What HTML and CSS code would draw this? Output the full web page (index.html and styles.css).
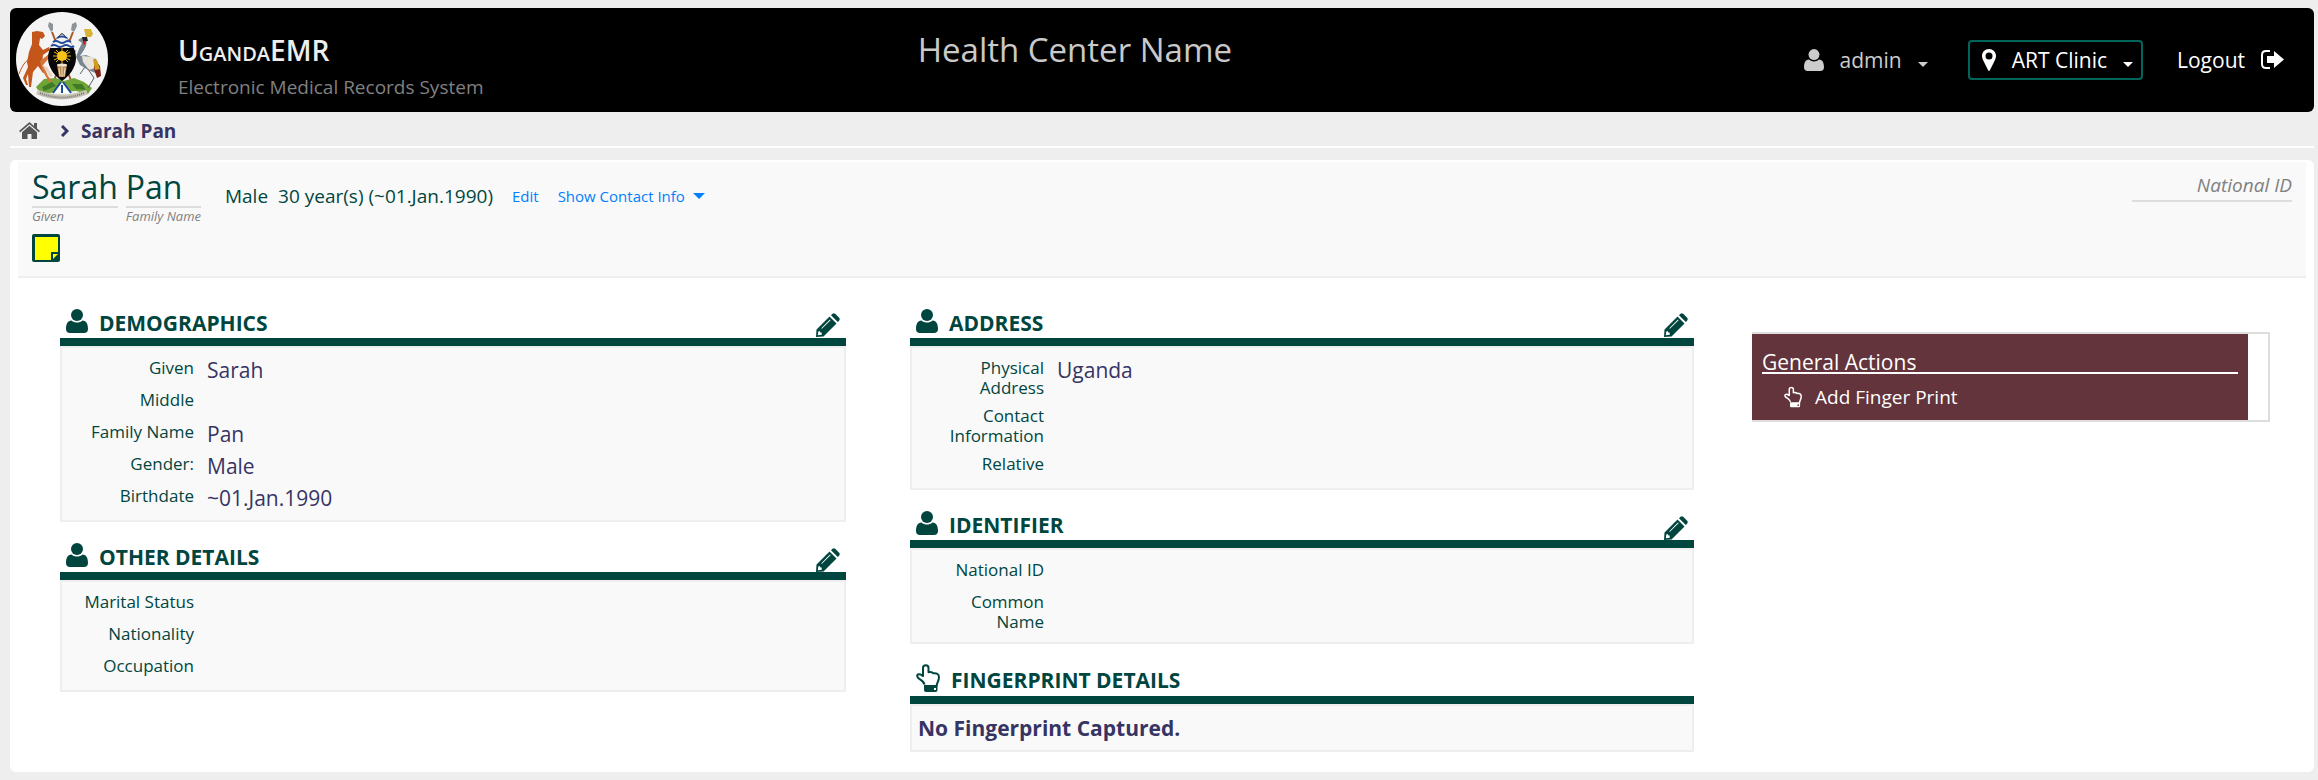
FILE: index.html
```html
<!DOCTYPE html>
<html lang="en">
  <head>
    <meta charset="utf-8">
    <title>UgandaEMR - Sarah Pan</title>
    <link rel="stylesheet" href="styles.css">
  </head>
  <body>
    <!-- shared icons -->
    <svg class="sprite" width="0" height="0">
      <symbol id="icon-user" viewBox="0 0 22 24">
        <circle cx="11" cy="6" r="6" />
        <path d="M5.500 11.500C8.500 14.200 13.500 14.200 16.500 11.500C20.500 11.500 22 15.500 22 20C22 22.500 20.500 24 18 24H4C1.500 24 0 22.500 0 20C0 15.500 1.500 11.500 5.500 11.500Z" />
      </symbol>
      <symbol id="icon-pencil" viewBox="0 0 24 24">
        <path fill-rule="evenodd" d="M0 24L.5 16.500L13.500 3.500L20.500 10.500L7.500 23.500ZM2.300 18.500L1.800 22.200L5.800 21.700L5.600 19.500L4 19.300L3.800 18ZM5.300 15.200L14 6.600L14.600 7.200L5.900 15.800Z" />
        <path d="M15 2.200L16.500.7Q18 -.2 19.200.8L23.200 4.800Q24.200 6 23.200 7.500L21.800 9Z" />
      </symbol>
      <symbol id="icon-hand" viewBox="0 0 24 28">
        <path fill="none" stroke="currentColor" stroke-width="2" stroke-linejoin="round" d="M8.500 20.500C8 17.500 6 16.500 3.500 15C.5 13.500.5 10.500 3 10.300C5 10.200 6 11.500 7 12V4C7 .3 12.500.3 12.500 4V8.200C15 7.600 16.500 8.300 17.300 9.300C19.500 8.800 23 9.500 23 13C23 17 21 18.500 20.500 22" />
        <path fill-rule="evenodd" d="M8 21H21.500V26Q21.500 28 19.500 28H10Q8 28 8 26ZM18 24V26H20V24Z" />
      </symbol>
    </svg>

    <header class="top-bar">
      <a class="logo" href="#" aria-label="Home">
        <svg width="92" height="94" viewBox="0 0 92 94">
          <ellipse cx="46" cy="47" rx="46" ry="47" fill="#f4f4f4" />
          <!-- spears -->
          <path d="M36 20L58 76M57 20L35 76" stroke="#a8582a" stroke-width="2" />
          <path d="M33 10L37 12L37 18L35 20L32 14ZM60 10L56 12L55 18L58 20L61 14Z" fill="#8d959a" />
          <!-- mound -->
          <path d="M20 75L28 67L40 66L48 69L58 66L68 70L76 76L72 82L60 79L32 81L24 81Z" fill="#6fa536" />
          <path d="M26 75L36 70L40 74L28 79ZM56 72L66 72L70 78L60 77Z" fill="#3f7a25" />
          <path d="M46 70L36 82L46 80L57 82Z" fill="#fff" />
          <path d="M45 70L37 81M47 70L55 81M46 73V81" stroke="#1b4b9b" stroke-width="2" />
          <!-- antelope -->
          <path d="M16 20L21 19L27 20L29 24L26 27L24 26L23 33L27 38L33 35L34 38L27 43L26 53L30 60L27 61L22 54L17 60L15 75L13 75L12 62L10 67L12 73L10 73L7 66L12 55L11 50L13 40L16 32Z" fill="#c4561b" />
          <path d="M24 49L33 42L34 45L27 53L32 64L36 69L33 70L26 58Z" fill="#d4763b" />
          <path d="M12 48Q7 51 3 62" stroke="#c4561b" stroke-width="1" fill="none" />
          <path d="M26 53L31 55L37 64L34 65Z" fill="#ead4bd" />
          <!-- crane -->
          <path d="M68 17L75 17L77 22L75 25L70 25Z" fill="#d8b334" />
          <path d="M62 28L67 25L71 28L70 34L68 38L64 44L70 43L80 47L84 57L82 62L72 58L64 53L60 45L63 37L66 31Z" fill="#7a8791" />
          <path d="M66 25L71 25L72 29L67 29Z" fill="#222" />
          <path d="M67 29L70 29L69 33L67 32Z" fill="#c6251f" />
          <path d="M66 44L78 45L82 55L73 58L67 50Z" fill="#e8e4da" />
          <path d="M78 47L84 54L85 64L81 66L78 57Z" fill="#7d2317" />
          <path d="M77 47L81 48L84 57L79 58Z" fill="#cf9c20" />
          <path d="M69 55L64 62M72 57L78 66L72 76M60 39L54 40" stroke="#57616b" stroke-width="1" fill="none" />
          <!-- shield -->
          <path d="M46 21C52 26 60 35 60 46C60 56 53 64 46 69C39 64 32 56 32 46C32 35 40 26 46 21Z" fill="#080808" />
          <path d="M46 22C50 25 55 30 58 36H34C37 30 42 25 46 22Z" fill="#f4f4f4" />
          <path d="M41 26Q46 23 51 26M37 30Q40 28 43 30T49 30T55 30M35 34Q38 32 41 34T47 34T53 34T58 34" stroke="#244a9c" stroke-width="2" fill="none" />
          <path d="M46 35V53M37 44H55M40 38L52 50M52 38L40 50M38 40L54 48M54 40L38 48" stroke="#e8b719" stroke-width="1" />
          <circle cx="46" cy="44" r="5" fill="#f6c31d" />
          <path d="M41 53H51L49 65H43Z" fill="#b98a56" />
          <ellipse cx="46" cy="53" rx="5" ry="1.500" fill="#eee2cc" />
          <path d="M43 56L44 64M46 55V65M49 56L48 64" stroke="#f0dcb8" stroke-width="1" />
          <!-- scroll -->
          <path d="M21 80Q46 90 71 80" fill="none" stroke="#c9c5b6" stroke-width="5" />
          <path d="M24 81Q46 90 68 81" fill="none" stroke="#777" stroke-width="2" stroke-dasharray="1 1" />
        </svg>
      </a>
      <div class="brand">
        <h1 class="brand-name">UgandaEMR</h1>
        <p class="brand-text">Electronic Medical Records System</p>
      </div>
      <div class="center-name">Health Center Name</div>
      <nav class="user-nav">
        <button type="button" class="nav-user">
          <svg width="20" height="22"><use href="#icon-user" /></svg>
          admin
          <span class="caret"></span>
        </button>
        <button type="button" class="nav-location">
          <svg width="14" height="22" viewBox="0 0 14 22">
            <path fill-rule="evenodd" d="M7 0C11 0 14 3 14 7C14 9 13 11 12 13L8 21Q7 23 6 21L2 13C1 11 0 9 0 7C0 3 3 0 7 0ZM7 3.500A3.500 3.500 0 1 0 7 10.500A3.500 3.500 0 1 0 7 3.500Z" />
          </svg>
          ART Clinic
          <span class="caret"></span>
        </button>
        <a class="nav-logout" href="#">
          Logout
          <svg width="23" height="20" viewBox="0 0 23 20">
            <path d="M9 1H5Q1 1 1 5V14Q1 18 5 18H9" fill="none" stroke="currentColor" stroke-width="2" />
            <path d="M6 6H13V1L23 9.500L13 18V13H6Z" />
          </svg>
        </a>
      </nav>
    </header>

    <nav class="breadcrumbs">
      <a href="#" aria-label="Home">
        <svg class="home-icon" width="21" height="18" viewBox="0 0 21 18">
          <path d="M10.500 0L15 4V1H18V6.500L21 9L19.800 10.300L10.500 2.300L1.200 10.300L0 9Z" />
          <path d="M10.500 3.800L18 10.200V17H12.500V12H8.500V17H3V10.200Z" />
        </svg>
      </a>
      <svg class="chevron" width="8" height="12" viewBox="0 0 8 12"><path d="M1 1L6 6L1 11" /></svg>
      <span>Sarah Pan</span>
    </nav>

    <main class="panel">
      <div class="patient-header">
        <div>
          <div class="patient-row">
            <h2 class="patient-name">
              <span class="name-part">Sarah<em>Given</em></span>
              <span class="name-part">Pan<em>Family Name</em></span>
            </h2>
            <span class="gender">Male</span>
            <span class="age">30 year(s) (~01.Jan.1990)</span>
            <a class="header-link" href="#">Edit</a>
            <a class="header-link" href="#">Show Contact Info <span class="caret-large"></span></a>
          </div>
          <button type="button" class="note" aria-label="Sticky note">
            <svg width="28" height="28" viewBox="0 0 28 28">
              <rect width="28" height="28" rx="2" fill="#00463f" />
              <path d="M3 3H26V18H19V26H3Z" fill="#ff0" />
              <path d="M21 25V20H26Z" fill="#ff0" />
            </svg>
          </button>
        </div>
        <div class="identifier"><em>National ID</em></div>
      </div>

      <div class="dashboard">
        <div class="column-first">
          <section class="info">
            <div class="info-header">
              <svg width="22" height="24"><use href="#icon-user" /></svg>
              <h3>DEMOGRAPHICS</h3>
              <button type="button" class="edit" aria-label="Edit demographics"><svg width="24" height="24"><use href="#icon-pencil" /></svg></button>
            </div>
            <dl class="info-body">
              <div><dt>Given</dt><dd>Sarah</dd></div>
              <div><dt>Middle</dt><dd></dd></div>
              <div><dt>Family Name</dt><dd>Pan</dd></div>
              <div><dt>Gender:</dt><dd>Male</dd></div>
              <div><dt>Birthdate</dt><dd>~01.Jan.1990</dd></div>
            </dl>
          </section>
          <section class="info">
            <div class="info-header">
              <svg width="22" height="24"><use href="#icon-user" /></svg>
              <h3>OTHER DETAILS</h3>
              <button type="button" class="edit" aria-label="Edit other details"><svg width="24" height="24"><use href="#icon-pencil" /></svg></button>
            </div>
            <dl class="info-body">
              <div><dt>Marital Status</dt><dd></dd></div>
              <div><dt>Nationality</dt><dd></dd></div>
              <div><dt>Occupation</dt><dd></dd></div>
            </dl>
          </section>
        </div>

        <div class="column-second">
          <section class="info">
            <div class="info-header">
              <svg width="22" height="24"><use href="#icon-user" /></svg>
              <h3>ADDRESS</h3>
              <button type="button" class="edit" aria-label="Edit address"><svg width="24" height="24"><use href="#icon-pencil" /></svg></button>
            </div>
            <dl class="info-body">
              <div><dt>Physical Address</dt><dd>Uganda</dd></div>
              <div><dt>Contact Information</dt><dd></dd></div>
              <div><dt>Relative</dt><dd></dd></div>
            </dl>
          </section>
          <section class="info">
            <div class="info-header">
              <svg width="22" height="24"><use href="#icon-user" /></svg>
              <h3>IDENTIFIER</h3>
              <button type="button" class="edit" aria-label="Edit identifier"><svg width="24" height="24"><use href="#icon-pencil" /></svg></button>
            </div>
            <dl class="info-body">
              <div><dt>National ID</dt><dd></dd></div>
              <div><dt>Common Name</dt><dd></dd></div>
            </dl>
          </section>
          <section class="info">
            <div class="info-header info-header-tall">
              <svg width="24" height="28"><use href="#icon-hand" /></svg>
              <h3>FINGERPRINT DETAILS</h3>
            </div>
            <p class="info-message">No Fingerprint Captured.</p>
          </section>
        </div>

        <aside class="actions">
          <div class="actions-inner">
            <h3>General Actions</h3>
            <a href="#">
              <svg width="18" height="22" viewBox="0 0 24 28"><use href="#icon-hand" /></svg>
              Add Finger Print
            </a>
          </div>
        </aside>
      </div>
    </main>
  </body>
</html>
```
FILE: styles.css
```css
* {
  box-sizing: border-box;
}

body {
  margin: 0;
  padding: 8px 4px 8px 10px;
  background: #eee;
  color: #363463;
  font-family: "Open Sans", sans-serif;
  font-size: 21px;
}

h1, h2, h3, p, dl, dd {
  margin: 0;
}

a {
  color: inherit;
  text-decoration: none;
}

button {
  padding: 0;
  border: none;
  background: none;
  color: inherit;
  font: inherit;
  cursor: pointer;
}

svg {
  display: block;
  flex: none;
  fill: currentColor;
}

.sprite {
  position: absolute;
}

.caret {
  margin-top: 8px;
  border: 5px solid transparent;
  border-top-color: currentColor;
  border-bottom: none;
}

/* top bar */
.top-bar {
  display: grid;
  grid-template-columns: 6fr auto 7fr;
  height: 104px;
  padding: 4px 30px 0 6px;
  background: #000;
  border-radius: 6px;
}

.logo {
  grid-area: 1 / 1;
  justify-self: start;
}

.brand {
  grid-area: 1 / 1;
  padding: 18px 0 0 162px;
}

.brand-name {
  color: #eee;
  font-size: 28px;
  font-weight: 600;
  font-variant: small-caps;
  line-height: 40px;
}

.brand-text {
  color: #808080;
  font-size: 19px;
  line-height: 34px;
}

.center-name {
  padding-top: 16px;
  color: #c9c9c9;
  font-family: "Trebuchet MS", "Open Sans", sans-serif;
  font-size: 33px;
  line-height: 44px;
}

.user-nav {
  display: flex;
  justify-self: end;
  align-items: center;
  height: 40px;
  margin-top: 28px;
  color: #fff;
}

.nav-user,
.nav-location,
.nav-logout {
  display: flex;
  align-items: center;
  gap: 16px;
}

.nav-user {
  margin-right: 40px;
  color: #ccc;
}

.nav-location {
  height: 40px;
  margin-right: 34px;
  padding: 0 8px 0 12px;
  border: 2px solid #00665c;
  border-radius: 4px;
}

/* breadcrumbs */
.breadcrumbs {
  display: flex;
  align-items: center;
  height: 36px;
  padding: 3px 9px 0;
  border-bottom: 2px solid #fff;
  font-size: 19px;
  font-weight: bold;
}

.home-icon {
  color: #555;
}

.chevron {
  margin: 0 12px 0 21px;
  fill: none;
  stroke: currentColor;
  stroke-width: 3;
}

/* patient panel */
.panel {
  margin-top: 12px;
  padding: 2px 8px 20px;
  background: #fff;
  border-radius: 6px;
}

.patient-header {
  display: flex;
  justify-content: space-between;
  padding: 5px 14px 14px;
  background: #f9f9f9;
  border-bottom: 2px solid #eee;
  color: #00463f;
}

.patient-row {
  display: flex;
  height: 58px;
  font-size: 19px;
  line-height: 58px;
}

.patient-name {
  display: flex;
  gap: 8px;
  margin-right: 24px;
  font-size: 32px;
  font-weight: normal;
  line-height: 39px;
}

.name-part em {
  display: block;
  border-top: 2px solid #ddd;
  color: #808080;
  font-size: 13px;
  line-height: 16px;
}

.gender {
  margin-right: 10px;
}

.header-link {
  display: flex;
  align-items: center;
  margin-left: 19px;
  color: #007fff;
  font-size: 15px;
}

.caret-large {
  margin-left: 8px;
  border: 6px solid transparent;
  border-top-color: currentColor;
  border-bottom: none;
}

.note {
  display: block;
  margin-top: 9px;
}

.identifier {
  align-self: flex-start;
  width: 160px;
  padding-top: 3px;
  border-bottom: 2px solid #ddd;
  color: #808080;
  font-size: 19px;
  line-height: 30px;
  text-align: right;
}

/* dashboard columns */
.dashboard {
  display: grid;
  grid-template-columns: 850fr 842fr 518fr;
  padding: 26px 36px 0 42px;
}

.column-first {
  padding-right: 64px;
}

.column-second {
  padding-right: 58px;
}

.info {
  margin-bottom: 16px;
  color: #00463f;
}

.info:last-child {
  margin-bottom: 0;
}

.info-header {
  display: flex;
  align-items: center;
  gap: 11px;
  height: 42px;
  padding: 0 6px;
  border-bottom: 8px solid #00463f;
}

.info-header h3 {
  padding-top: 4px;
  font-size: 21px;
  line-height: 26px;
}

.info-header-tall {
  height: 44px;
}

.edit {
  margin: 8px 0 0 auto;
}

.info + .info .edit {
  margin-top: 10px;
}

.info-body {
  padding: 10px 10px 2px;
  background: #f9f9f9;
  border: 2px solid #eee;
}

.info-body div {
  display: flex;
  gap: 13px;
  min-height: 24px;
  margin-bottom: 8px;
}

.info-body dt {
  width: 122px;
  font-size: 17px;
  line-height: 20px;
  text-align: right;
}

.info-body dd {
  color: #363463;
  line-height: 24px;
}

.info-message {
  padding: 8px 6px;
  background: #f9f9f9;
  border: 2px solid #eee;
  color: #363463;
  font-weight: bold;
  line-height: 28px;
}

/* general actions */
.actions {
  align-self: start;
  margin-top: 28px;
  padding-right: 20px;
  border: 2px solid #ddd;
  border-left: none;
}

.actions-inner {
  padding: 18px 10px 9px;
  background: #63343c;
  color: #fff;
}

.actions h3 {
  border-bottom: 2px solid #fff;
  font-size: 21px;
  font-weight: normal;
  line-height: 20px;
}

.actions a {
  display: flex;
  align-items: center;
  gap: 13px;
  margin-top: 9px;
  padding: 0 22px;
  font-size: 19px;
  line-height: 28px;
}
```
